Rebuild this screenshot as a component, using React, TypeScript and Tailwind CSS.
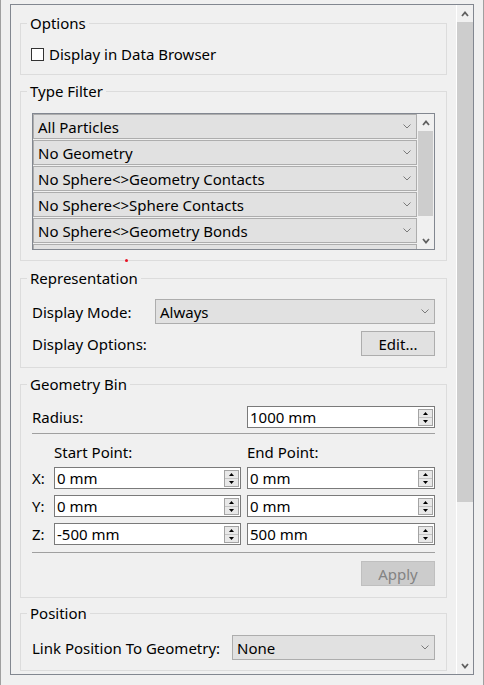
import React from "react"

// last row is only peeking out at the bottom of the list
const TYPE_FILTERS = [
  "All Particles",
  "No Geometry",
  "No Sphere<>Geometry Contacts",
  "No Sphere<>Sphere Contacts",
  "No Sphere<>Geometry Bonds",
  "",
]

// small combobox chevron
function Chevron() {
  return (
    <svg width="8" height="5" viewBox="0 0 8 5" className="shrink-0">
      <polyline points="0.5,0.5 4,4 7.5,0.5" fill="none" stroke="#7a7a7a" strokeWidth="1" />
    </svg>
  )
}

function ScrollArrow({ dir }: { dir: "up" | "down" }) {
  return (
    <svg width="8" height="6" viewBox="0 0 8 6">
      <polyline
        points={dir === "up" ? "1,5 4,1.5 7,5" : "1,1 4,4.5 7,1"}
        fill="none"
        stroke="#606060"
        strokeWidth="1.8"
      />
    </svg>
  )
}

function ScrollBar({
  thumbTop,
  thumbHeight,
  inset,
  className = "",
}: {
  thumbTop: number
  thumbHeight: number
  inset?: boolean
  className?: string
}) {
  return (
    <div className={"h-full flex flex-col bg-[#f0f0f0] shrink-0 " + className}>
      <div className="h-[17px] flex items-center justify-center">
        <ScrollArrow dir="up" />
      </div>
      <div className="flex-1 relative">
        <div
          className={inset ? "absolute left-[1px] right-[1px] bg-[#cdcdcd]" : "absolute left-0 right-0 bg-[#cdcdcd]"}
          style={{ top: thumbTop, height: thumbHeight }}
        />
      </div>
      <div className="h-[17px] flex items-center justify-center">
        <ScrollArrow dir="down" />
      </div>
    </div>
  )
}

function Combo({ text, className = "" }: { text: string; className?: string }) {
  return (
    <div
      className={
        "h-[25px] border border-[#adadad] bg-[#e1e1e1] flex items-center justify-between pl-[4px] pr-[5px] " +
        className
      }
    >
      <span className="whitespace-nowrap">{text}</span>
      <Chevron />
    </div>
  )
}

function SpinBox({ value }: { value: string }) {
  return (
    <div className="h-[22px] border border-[#7a7a7a] bg-white flex items-center justify-between pl-[2px] pr-[1px]">
      <span className="whitespace-nowrap">{value}</span>
      <div className="w-[15px] h-[17px] border border-[#a3a3a3] flex flex-col">
        <div className="flex-1 bg-[#e8e8e8] flex items-center justify-center border-b border-[#c4c4c4]">
          <svg width="5" height="3" viewBox="0 0 5 3">
            <polygon points="0,3 2.5,0 5,3" fill="#000" />
          </svg>
        </div>
        <div className="flex-1 bg-[#e8e8e8] flex items-center justify-center">
          <svg width="5" height="3" viewBox="0 0 5 3">
            <polygon points="0,0 2.5,3 5,0" fill="#000" />
          </svg>
        </div>
      </div>
    </div>
  )
}

function Button({ label, disabled }: { label: string; disabled?: boolean }) {
  return (
    <div
      className={
        disabled
          ? "w-[74px] h-[25px] border border-[#bfbfbf] bg-[#cccccc] text-[#838383] flex items-center justify-center"
          : "w-[74px] h-[25px] border border-[#adadad] bg-[#e1e1e1] flex items-center justify-center"
      }
    >
      {label}
    </div>
  )
}

function Group({
  title,
  className = "",
  children,
}: {
  title: string
  className?: string
  children: React.ReactNode
}) {
  return (
    <fieldset className={"relative min-w-0 border border-[#dcdcdc] " + className}>
      <legend className="ml-[6px] px-[3px] leading-[18px]">{title}</legend>
      {children}
    </fieldset>
  )
}

export default function App() {
  return (
    <div className="w-[484px] h-[685px] bg-[#f0f0f0] border-x border-[#a0a0a0] pt-[4px] pl-[9px] text-[15px] leading-[18px] text-black font-['Noto_Sans','Liberation_Sans',sans-serif] overflow-hidden">
      <div className="w-[464px] h-[671px] border border-[#828790] flex overflow-hidden">
        <div className="w-[445px] shrink-0 px-[9px] pt-[9px]">
          {/* Options */}
          <Group title="Options">
            <div className="px-[11px] pt-[13px] pb-[11px]">
              <label className="flex items-center h-[18px]">
                <span className="w-[13px] h-[13px] border border-[#333333] bg-white -ml-[1px] mr-[5px]" />
                Display in Data Browser
              </label>
            </div>
          </Group>

          {/* Type Filter */}
          <Group title="Type Filter" className="mt-[7px]">
            <div className="px-[11px] pt-[13px] pb-[10px]">
              <div className="h-[137px] border border-[#828790] bg-white flex">
                <div className="flex-1 min-w-0 flex flex-col gap-[1px] overflow-hidden bg-[#f0f0f0]">
                  {TYPE_FILTERS.map((t, i) => (
                    <Combo key={i} text={t} className="shrink-0" />
                  ))}
                </div>
                <ScrollBar thumbTop={0} thumbHeight={85} inset className="w-[17px]" />
              </div>
            </div>
            <div className="absolute left-[104px] bottom-[-2px] w-[3px] h-[3px] rounded-full bg-[#e81123]" />
          </Group>

          {/* Representation */}
          <Group title="Representation" className="mt-[8px]">
            <div className="px-[11px] pt-[12px] pb-[11px] flex flex-col gap-[7px]">
              <div className="flex items-center justify-between h-[25px]">
                <span>Display Mode:</span>
                <Combo text="Always" className="w-[280px]" />
              </div>
              <div className="flex items-center justify-between h-[25px]">
                <span>Display Options:</span>
                <Button label="Edit..." />
              </div>
            </div>
          </Group>

          {/* Geometry Bin */}
          <Group title="Geometry Bin" className="mt-[7px]">
            <div className="px-[11px] pt-[13px] pb-[11px]">
              <div className="grid grid-cols-[16px_187px_188px] gap-x-[6px] items-center">
                <span className="col-span-2">Radius:</span>
                <SpinBox value="1000 mm" />
              </div>
              <div className="mt-[5px] border-t border-[#a0a0a0]" />
              <div className="mt-[9px] grid grid-cols-[16px_187px_188px] gap-x-[6px] gap-y-[6px] items-center">
                <span />
                <span>Start Point:</span>
                <span>End Point:</span>
                <span>X:</span>
                <SpinBox value="0 mm" />
                <SpinBox value="0 mm" />
                <span>Y:</span>
                <SpinBox value="0 mm" />
                <SpinBox value="0 mm" />
                <span>Z:</span>
                <SpinBox value="-500 mm" />
                <SpinBox value="500 mm" />
              </div>
              <div className="mt-[7px] border-t border-[#a0a0a0]" />
              <div className="mt-[8px] flex justify-end">
                <Button label="Apply" disabled />
              </div>
            </div>
          </Group>

          {/* Position */}
          <Group title="Position" className="mt-[6px]">
            <div className="px-[11px] pt-[13px] pb-[10px] flex items-center justify-between">
              <span className="whitespace-nowrap">Link Position To Geometry:</span>
              <Combo text="None" className="w-[203px]" />
            </div>
          </Group>
        </div>
        <div className="border-l border-white flex">
          <ScrollBar thumbTop={0} thumbHeight={480} className="w-[16px]" />
        </div>
      </div>
    </div>
  )
}
